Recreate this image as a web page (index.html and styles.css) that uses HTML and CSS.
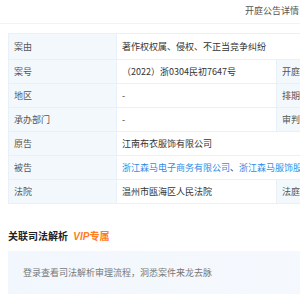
FILE: index.html
```html
<!DOCTYPE html>
<html lang="zh">
<head>
    <meta charset="UTF-8">
    <title>开庭公告详情</title>
    <link rel="stylesheet" href="styles.css">
</head>
<body>
    <div class="page">
        <div class="modal-header">开庭公告详情</div>

        <table class="detail-table">
            <colgroup>
                <col class="col-label">
                <col class="col-value">
                <col class="col-label">
                <col class="col-value2">
            </colgroup>
            <tr class="first-row">
                <td class="label">案由</td>
                <td colspan="3">著作权权属、侵权、不正当竞争纠纷</td>
            </tr>
            <tr>
                <td class="label">案号</td>
                <td>（2022）浙0304民初7647号</td>
                <td class="label">开庭日期</td>
                <td>2022-08-30 09:00</td>
            </tr>
            <tr>
                <td class="label">地区</td>
                <td>-</td>
                <td class="label">排期日期</td>
                <td>-</td>
            </tr>
            <tr>
                <td class="label">承办部门</td>
                <td>-</td>
                <td class="label">审判长/主审人</td>
                <td>-</td>
            </tr>
            <tr>
                <td class="label">原告</td>
                <td colspan="3">江南布衣服饰有限公司</td>
            </tr>
            <tr>
                <td class="label">被告</td>
                <td colspan="3" class="links"><a href="#">浙江森马电子商务有限公司</a>、<a href="#">浙江森马服饰股份有限公司</a></td>
            </tr>
            <tr>
                <td class="label">法院</td>
                <td>温州市瓯海区人民法院</td>
                <td class="label">法庭</td>
                <td>-</td>
            </tr>
        </table>

        <div class="section-title">关联司法解析 <span class="vip"><i>VIP</i>专属</span></div>
        <div class="vip-box">登录查看司法解析审理流程，洞悉案件来龙去脉</div>
    </div>
</body>
</html>
```

FILE: styles.css
```css
body {
    margin: 0;
    overflow: hidden;
    background-color: #fff;
    font-family: "Noto Sans CJK SC", "Noto Sans", sans-serif;
    color: #333;
}

.page {
    width: 544px;
}

.modal-header {
    height: 23px;
    line-height: 22px;
    font-size: 9px;
    color: #555;
    text-align: center;
    border-bottom: 1px solid #f1f3f6;
}

.detail-table {
    margin: 9px 8px 0 8px;
    width: 528px;
    border-collapse: collapse;
    table-layout: fixed;
    font-size: 9px;
}

.col-label {
    width: 108px;
}

.col-value {
    width: 160px;
}

.detail-table td {
    height: 23px;
    padding: 0 5px;
    border: 1px solid #e9f0f8;
    white-space: nowrap;
    overflow: hidden;
    color: #333;
}

.detail-table .first-row td {
    height: 25px;
}

.detail-table td.label {
    background-color: #f3f8fd;
    color: #555;
}

.links a {
    color: #2f8ce8;
    text-decoration: none;
}

.links {
    color: #2f8ce8;
}

.section-title {
    margin: 26px 8px 0 8px;
    font-size: 10px;
    font-weight: bold;
    color: #222;
    line-height: 12px;
}

.vip {
    margin-left: 3px;
    color: #ff7c1f;
}

.vip i {
    font-family: "Liberation Sans", sans-serif;
    font-style: italic;
    font-weight: 900;
}

.vip-box {
    margin: 8px 0 0 8px;
    height: 43px;
    line-height: 43px;
    padding-left: 15px;
    font-size: 9px;
    color: #777;
    background: linear-gradient(100deg, #f2f7fd 0%, #f5f9fe 50%, #eef5fd 100%);
}
```
